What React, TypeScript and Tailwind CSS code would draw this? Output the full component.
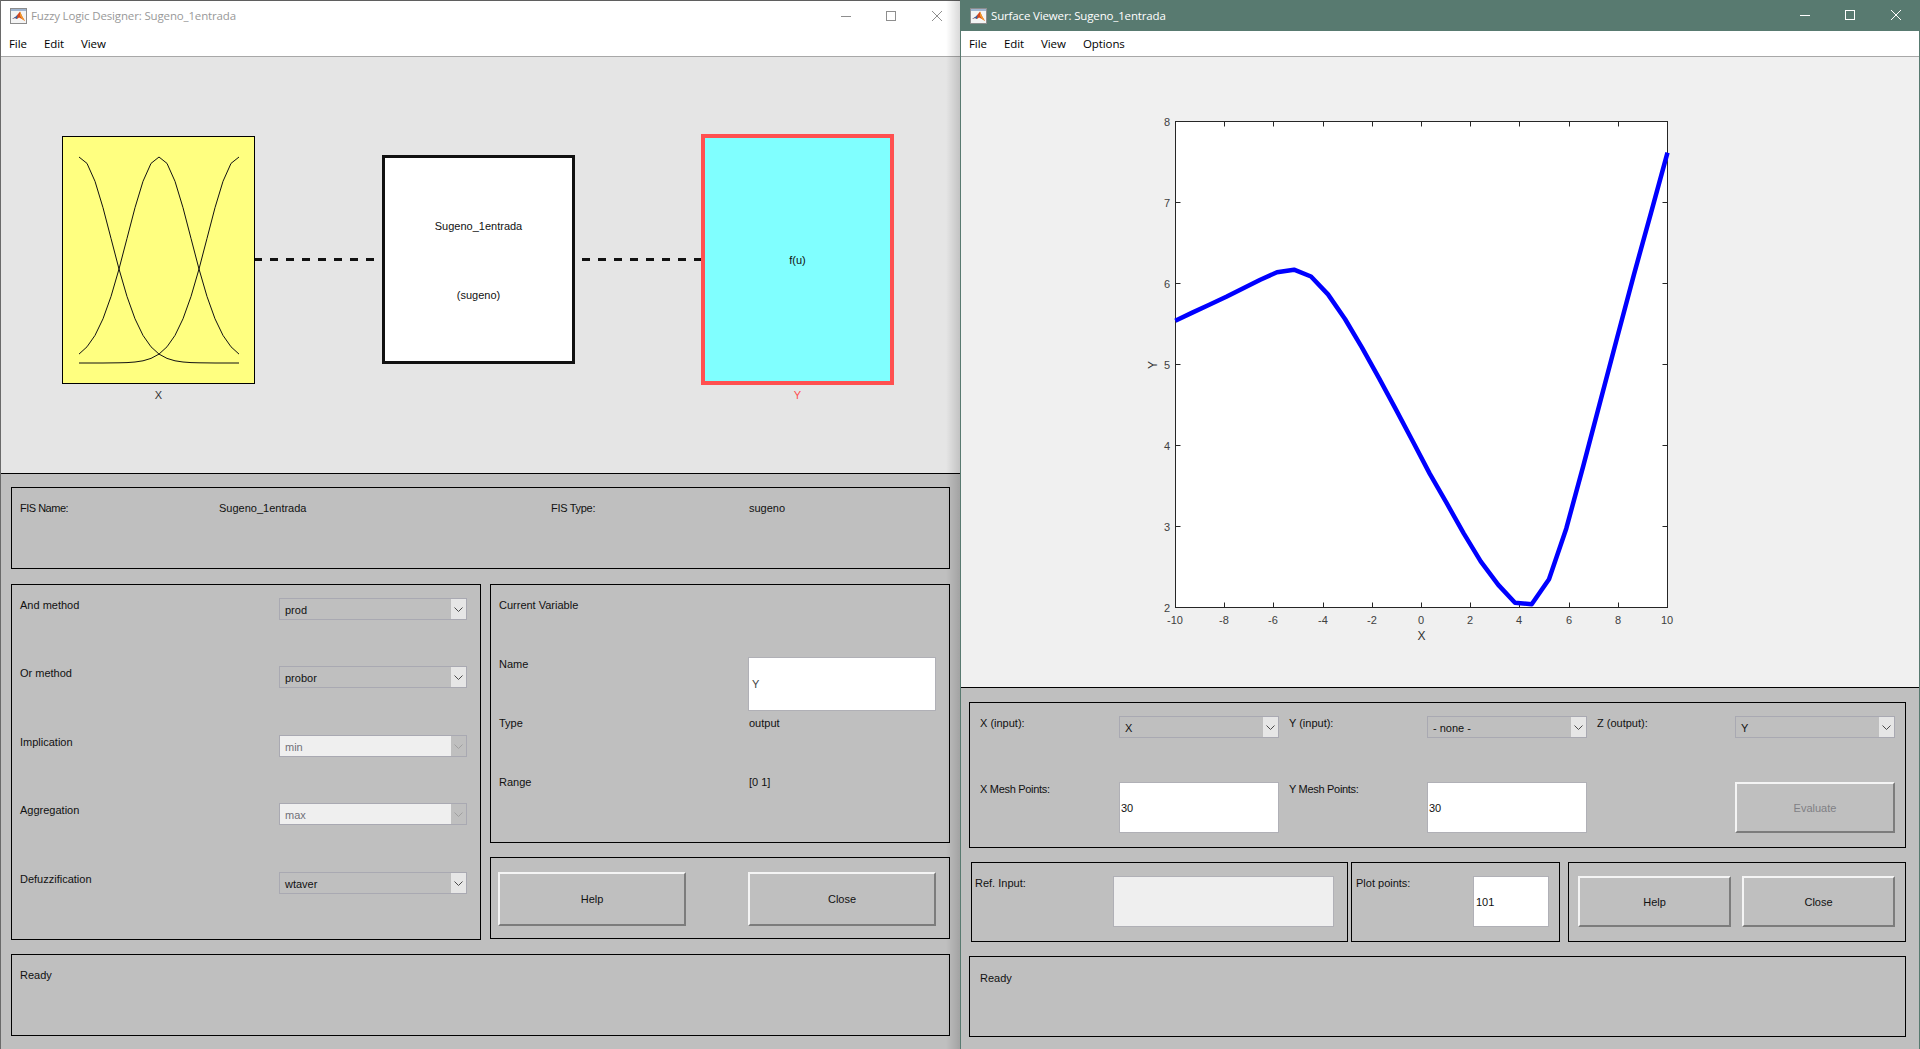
import type { ReactNode } from "react";

// gaussian membership curves of the X input, 21 samples each like the original plot
function mfPoints(center: number) {
  const pts: string[] = [];
  for (let i = 0; i <= 20; i++) {
    const x = 79 + i * 8;
    const y = 363 - 206 * Math.exp(-((x - center) * (x - center)) / 2038);
    pts.push(`${x},${y.toFixed(1)}`);
  }
  return pts.join(" ");
}

const surfaceCurve =
  "1175.3,320.8 1192.3,312.6 1209.3,304.7 1226.3,296.8 1243.3,288.2 1260.3,279.7 1277,272.2 1294,269.7 1311,276.5 1328,294.4 1345,319 1362,347.7 1379,378.1 1396,409.6 1413,441.8 1429.7,473.6 1446.7,503.2 1463.7,533.3 1480.7,561.3 1498.3,584.9 1515,602.8 1531.7,604.3 1549,579.2 1566.3,528.4 1583.3,465.8 1600.3,401.4 1617.3,337 1634,274.3 1651,212.8 1667.5,152.7";

const xTicks = [-10, -8, -6, -4, -2, 0, 2, 4, 6, 8, 10];
const yTicks = [2, 3, 4, 5, 6, 7, 8];

function MatlabIcon() {
  return (
    <svg width="17" height="16" viewBox="0 0 17 16" className="shrink-0">
      <rect x="0.5" y="0.5" width="16" height="15" fill="#f4f4f4" stroke="#8c8c8c" />
      <rect x="1" y="1" width="15" height="2" fill="#9fb4cf" />
      <path d="M2 11 L6 8.5 L8 6 L10 3.5 L12 8 L15 13 L12 11 L9 9.5 L7 11 L5 10 Z" fill="#d8481a" />
      <path d="M2 11 L6 8.5 L7.5 6.8 L7 11 L5 10 Z" fill="#2f63ad" />
      <path d="M10 3.5 L12 8 L15 13 L12 11 L10 8 Z" fill="#f09a2a" />
    </svg>
  );
}

function WindowControls({ color }: { color: string }) {
  return (
    <svg width="101" height="11" viewBox="0 0 101 11" className="shrink-0" fill="none" stroke={color}>
      <path d="M0 5.5 H10" />
      <rect x="45.5" y="0.5" width="9" height="9" />
      <path d="M91 0 L101 10 M101 0 L91 10" />
    </svg>
  );
}

function TitleBar({ title, active }: { title: string; active?: boolean }) {
  return (
    <div
      className={
        active
          ? "flex h-[31px] shrink-0 items-center bg-[#587a70] pl-[9px] text-white"
          : "flex h-[31px] shrink-0 items-center border-t border-[#5f5f5f] bg-white pl-[9px] text-[#999999]"
      }
    >
      <MatlabIcon />
      <span className="ml-[4px] font-['Open_Sans',sans-serif] text-[11.5px] tracking-[-0.15px]">{title}</span>
      <div className="ml-auto mr-[18px] flex">
        <WindowControls color={active ? "#ffffff" : "#8e8e8e"} />
      </div>
    </div>
  );
}

function MenuBar({ items }: { items: { label: string; width: string }[] }) {
  return (
    <div className="flex h-[26px] shrink-0 items-center border-b border-[#a8a8a8] bg-white pl-[8px] font-['Open_Sans',sans-serif] text-[11.5px] tracking-[-0.1px] text-black">
      {items.map((item) => (
        <span key={item.label} className={item.width}>
          {item.label}
        </span>
      ))}
    </div>
  );
}

function Box({ className, children }: { className: string; children?: ReactNode }) {
  return <div className={`shrink-0 border border-black ${className}`}>{children}</div>;
}

function Dropdown({ value, width, disabled }: { value: string; width: string; disabled?: boolean }) {
  return (
    <div
      className={`flex h-[22px] border border-[#a9a9b2] ${width} ${disabled ? "bg-[#efefef] text-[#6f6f78]" : "bg-[#bfbfbf]"}`}
    >
      <span className="flex-1 pl-[5px] pt-[4px]">{value}</span>
      <div className={`flex w-[15px] items-center justify-center ${disabled ? "bg-[#bfbfbf]" : "bg-[#e6e6e6]"}`}>
        <svg width="9" height="5" viewBox="0 0 9 5" fill="none" stroke={disabled ? "#a0a0a0" : "#4a4a4a"}>
          <path d="M0.5 0.5 L4.5 4.5 L8.5 0.5" />
        </svg>
      </div>
    </div>
  );
}

function Field({ value, className, pad }: { value: string; className: string; pad: string }) {
  return (
    <div className={`flex items-center border border-[#b0b0b6] bg-white ${pad} ${className}`}>{value}</div>
  );
}

function PushButton({ label, className, disabled }: { label: string; className: string; disabled?: boolean }) {
  return (
    <div
      className={`flex items-center justify-center border-2 border-t-[#f4f4f4] border-l-[#f4f4f4] border-r-[#7c7c7c] border-b-[#7c7c7c] bg-[#bfbfbf] ${className} ${disabled ? "text-[#7f7f85]" : ""}`}
    >
      {label}
    </div>
  );
}

function Dashes({ width, offset }: { width: number; offset: number }) {
  return (
    <svg width={width} height="3" viewBox={`0 0 ${width} 3`} className="shrink-0">
      <line x1="0" y1="1.5" x2={width} y2="1.5" stroke="#111111" strokeWidth="3" strokeDasharray="8 8" strokeDashoffset={offset} />
    </svg>
  );
}

function FisDiagram() {
  return (
    <div className="h-[416px] shrink-0 bg-[#e5e5e5] pl-[61px] pt-[77px]">
      <div className="flex h-[251px] items-center">
        <div className="h-[248px] w-[193px] shrink-0 border border-black bg-[#ffff80]">
          <svg viewBox="63 137 191 246" className="block h-full w-full" fill="none" stroke="#111111">
            <polyline points={mfPoints(79)} />
            <polyline points={mfPoints(159)} />
            <polyline points={mfPoints(239)} />
          </svg>
        </div>
        <Dashes width={119} offset={1} />
        <div className="ml-[8px] flex h-[209px] w-[193px] shrink-0 flex-col items-center border-[3px] border-[#111111] bg-white">
          <span className="mt-[61px]">Sugeno_1entrada</span>
          <span className="mt-[55px]">(sugeno)</span>
        </div>
        <div className="ml-[7px]">
          <Dashes width={119} offset={0} />
        </div>
        <div className="flex h-[251px] w-[193px] shrink-0 items-center justify-center border-4 border-[#ff5050] bg-[#80ffff]">
          f(u)
        </div>
      </div>
      <div className="mt-[3px] flex">
        <span className="w-[193px] text-center text-[#333333]">X</span>
        <span className="ml-[446px] w-[193px] text-center text-[#ff5050]">Y</span>
      </div>
    </div>
  );
}

const methods = [
  { label: "And method", value: "prod", gap: "" },
  { label: "Or method", value: "probor", gap: "mt-[46px]" },
  { label: "Implication", value: "min", gap: "mt-[47px]", disabled: true },
  { label: "Aggregation", value: "max", gap: "mt-[46px]", disabled: true },
  { label: "Defuzzification", value: "wtaver", gap: "mt-[47px]" },
];

function DesignerWindow() {
  return (
    <div className="relative flex h-full w-[960px] shrink-0 flex-col border-l border-[#6a6a6a]">
      <TitleBar title="Fuzzy Logic Designer: Sugeno_1entrada" />
      <MenuBar
        items={[
          { label: "File", width: "w-[35px]" },
          { label: "Edit", width: "w-[37px]" },
          { label: "View", width: "w-[40px]" },
        ]}
      />
      <FisDiagram />
      <div className="flex-1 border-t border-black bg-[#bfbfbf] pl-[10px] pt-[13px]">
        <Box className="grid h-[82px] w-[939px] grid-cols-[199px_332px_198px_1fr] pl-[8px] pt-[13px]">
          <span className="tracking-[-0.5px]">FIS Name:</span>
          <span>Sugeno_1entrada</span>
          <span className="tracking-[-0.3px]">FIS Type:</span>
          <span>sugeno</span>
        </Box>
        <div className="mt-[15px] flex gap-[9px]">
          <Box className="h-[356px] w-[470px] pl-[8px] pt-[13px]">
            {methods.map((m) => (
              <div key={m.label} className={`grid grid-cols-[259px_188px] ${m.gap}`}>
                <span>{m.label}</span>
                <Dropdown value={m.value} width="w-[188px]" disabled={m.disabled} />
              </div>
            ))}
          </Box>
          <div className="flex w-[460px] flex-col gap-[14px]">
            <Box className="h-[259px] pl-[8px] pt-[13px]">
              <div className="h-[59px]">Current Variable</div>
              <div className="grid h-[59px] grid-cols-[249px_188px]">
                <span>Name</span>
                <Field value="Y" className="h-[54px] text-[#444444]" pad="pl-[3px]" />
              </div>
              <div className="grid h-[59px] grid-cols-[250px_188px]">
                <span>Type</span>
                <span>output</span>
              </div>
              <div className="grid h-[59px] grid-cols-[250px_188px]">
                <span>Range</span>
                <span>[0 1]</span>
              </div>
            </Box>
            <Box className="flex h-[82px] justify-between pl-[7px] pr-[13px] pt-[14px]">
              <PushButton label="Help" className="h-[54px] w-[188px]" />
              <PushButton label="Close" className="h-[54px] w-[188px]" />
            </Box>
          </div>
        </div>
        <Box className="mt-[14px] h-[82px] w-[939px] pl-[8px] pt-[13px]">Ready</Box>
      </div>
      {/* drop shadow of the surface window falling on this one */}
      <div className="pointer-events-none absolute bottom-0 right-0 top-0 w-[14px] bg-gradient-to-r from-transparent to-black/15" />
    </div>
  );
}

function SurfacePlot() {
  return (
    <div className="h-[630px] shrink-0 bg-[#f0f0f0]">
      <svg viewBox="961 57 958 630" className="block h-[630px] w-[958px]">
        <rect x="1175.5" y="121.5" width="492" height="486" fill="#ffffff" stroke="#262626" />
        {xTicks.map((t) => {
          const x = Math.floor(1175.5 + (t + 10) * 24.6) + 0.5;
          return (
            <g key={t}>
              <path d={`M${x} 121.5 V126.5 M${x} 607.5 V602.5`} stroke="#262626" fill="none" />
              <text x={x - 0.5} y="624" textAnchor="middle" fontSize="11" fill="#404040">
                {t}
              </text>
            </g>
          );
        })}
        {yTicks.map((t) => {
          const y = Math.floor(607.5 - (t - 2) * 81) + 0.5;
          return (
            <g key={t}>
              <path d={`M1175.5 ${y} H1180.5 M1667.5 ${y} H1662.5`} stroke="#262626" fill="none" />
              <text x="1170" y={y + 4} textAnchor="end" fontSize="11" fill="#404040">
                {t}
              </text>
            </g>
          );
        })}
        <polyline points={surfaceCurve} fill="none" stroke="#0000ff" strokeWidth="4.5" strokeLinejoin="round" />
        <text x="1421.5" y="640" textAnchor="middle" fontSize="12" fill="#333333">
          X
        </text>
        <text transform="translate(1157 365) rotate(-90)" textAnchor="middle" fontSize="12" fill="#333333">
          Y
        </text>
      </svg>
    </div>
  );
}

function SurfaceWindow() {
  return (
    <div className="flex h-full w-[960px] shrink-0 flex-col border-x border-x-[#587a70] bg-white">
      <TitleBar title="Surface Viewer: Sugeno_1entrada" active />
      <MenuBar
        items={[
          { label: "File", width: "w-[35px]" },
          { label: "Edit", width: "w-[37px]" },
          { label: "View", width: "w-[42px]" },
          { label: "Options", width: "w-[50px]" },
        ]}
      />
      <SurfacePlot />
      <div className="flex-1 border-t border-black bg-[#bfbfbf] pl-[8px] pt-[14px]">
        <Box className="grid h-[146px] w-[937px] grid-cols-[139px_170px_138px_170px_138px_160px] grid-rows-[22px_51px] content-start gap-y-[44px] pl-[10px] pt-[13px]">
          <span>X (input):</span>
          <Dropdown value="X" width="w-[160px]" />
          <span>Y (input):</span>
          <Dropdown value="- none -" width="w-[160px]" />
          <span>Z (output):</span>
          <Dropdown value="Y" width="w-[160px]" />
          <span className="tracking-[-0.3px]">X Mesh Points:</span>
          <Field value="30" className="h-[51px] w-[160px]" pad="pl-[1px]" />
          <span className="tracking-[-0.3px]">Y Mesh Points:</span>
          <Field value="30" className="h-[51px] w-[160px]" pad="pl-[1px]" />
          <span />
          <PushButton label="Evaluate" className="h-[51px] w-[160px]" disabled />
        </Box>
        <div className="ml-[2px] mt-[14px] flex">
          <Box className="flex h-[80px] w-[377px] pl-[3px] pt-[13px]">
            <span className="w-[138px]">Ref. Input:</span>
            <div className="h-[51px] w-[221px] border border-[#b0b0b6] bg-[#efefef]" />
          </Box>
          <Box className="ml-[3px] flex h-[80px] w-[209px] pl-[4px] pt-[13px]">
            <span className="w-[117px]">Plot points:</span>
            <Field value="101" className="h-[51px] w-[76px]" pad="pl-[2px]" />
          </Box>
          <Box className="ml-[8px] flex h-[80px] w-[338px] gap-[11px] pl-[9px] pt-[13px]">
            <PushButton label="Help" className="h-[51px] w-[153px]" />
            <PushButton label="Close" className="h-[51px] w-[153px]" />
          </Box>
        </div>
        <Box className="mt-[14px] h-[81px] w-[937px] pl-[10px] pt-[14px]">Ready</Box>
      </div>
    </div>
  );
}

export default function App() {
  return (
    <div className="flex h-[1049px] w-[1920px] overflow-hidden font-['Liberation_Sans',Arial,sans-serif] text-[11px] leading-[14px] text-[#111111]">
      <DesignerWindow />
      <SurfaceWindow />
    </div>
  );
}
